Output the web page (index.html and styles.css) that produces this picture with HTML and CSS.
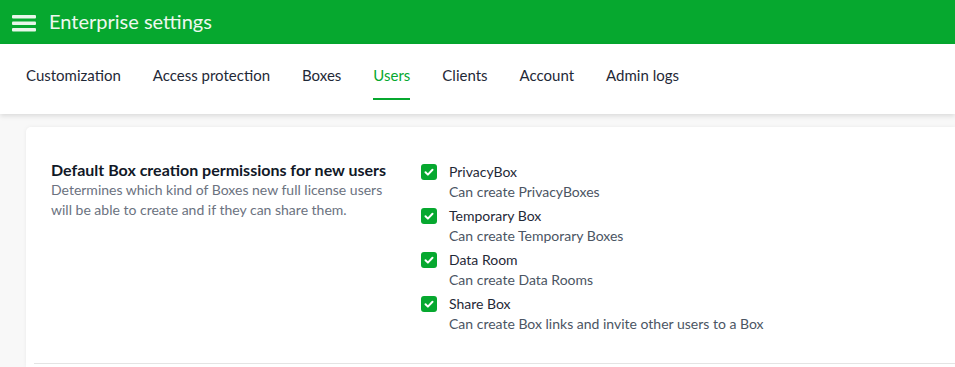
FILE: index.html
```html
<!DOCTYPE html>
<html lang="en">
<head>
    <meta charset="UTF-8">
    <meta name="viewport" content="width=device-width, initial-scale=1.0">
    <title>Enterprise settings</title>
    <link rel="stylesheet" href="styles.css">
</head>
<body>
    <header class="topbar">
        <svg class="menu-icon" width="24" height="18" viewBox="0 0 24 18">
            <rect x="0" y="1" width="24" height="3.5" rx="1"/>
            <rect x="0" y="7.5" width="24" height="3.5" rx="1"/>
            <rect x="0" y="14" width="24" height="3.5" rx="1"/>
        </svg>
        <h1 class="topbar-title">Enterprise settings</h1>
    </header>
    <nav class="tabs">
        <a class="tab">Customization</a>
        <a class="tab">Access protection</a>
        <a class="tab">Boxes</a>
        <a class="tab active">Users</a>
        <a class="tab">Clients</a>
        <a class="tab">Account</a>
        <a class="tab">Admin logs</a>
    </nav>
    <main class="content">
        <section class="card">
            <div class="setting">
                <div class="setting-info">
                    <h2>Default Box creation permissions for new users</h2>
                    <p>Determines which kind of Boxes new full license users will be able to create and if they can share them.</p>
                </div>
                <div class="options">
                    <label class="option">
                        <span class="check"><svg viewBox="0 0 16 16"><path d="M4.5 8.3l2.4 2.3 4.6-4.8"/></svg></span>
                        <span class="option-text">
                            <span class="option-name">PrivacyBox</span>
                            <span class="option-desc">Can create PrivacyBoxes</span>
                        </span>
                    </label>
                    <label class="option">
                        <span class="check"><svg viewBox="0 0 16 16"><path d="M4.5 8.3l2.4 2.3 4.6-4.8"/></svg></span>
                        <span class="option-text">
                            <span class="option-name">Temporary Box</span>
                            <span class="option-desc">Can create Temporary Boxes</span>
                        </span>
                    </label>
                    <label class="option">
                        <span class="check"><svg viewBox="0 0 16 16"><path d="M4.5 8.3l2.4 2.3 4.6-4.8"/></svg></span>
                        <span class="option-text">
                            <span class="option-name">Data Room</span>
                            <span class="option-desc">Can create Data Rooms</span>
                        </span>
                    </label>
                    <label class="option">
                        <span class="check"><svg viewBox="0 0 16 16"><path d="M4.5 8.3l2.4 2.3 4.6-4.8"/></svg></span>
                        <span class="option-text">
                            <span class="option-name">Share Box</span>
                            <span class="option-desc">Can create Box links and invite other users to a Box</span>
                        </span>
                    </label>
                </div>
            </div>
        </section>
    </main>
</body>
</html>
```

FILE: styles.css
```css
body {
    margin: 0;
    font-family: Lato, "Open Sans", sans-serif;
    background-color: #f8f8f8;
    color: #1f2937;
    overflow: hidden;
}
.topbar {
    height: 44px;
    background-color: #06a82f;
    display: flex;
    align-items: center;
    padding-left: 12px;
}
.menu-icon {
    fill: #e8f6ea;
    margin-right: 13px;
    margin-top: 1px;
}
.topbar-title {
    margin: 0 0 2px 0;
    font-size: 20px;
    font-weight: 400;
    color: #eef8ef;
}
.tabs {
    height: 70px;
    box-sizing: border-box;
    background: #fff;
    display: flex;
    align-items: flex-start;
    gap: 32px;
    padding: 22px 0 0 26px;
    box-shadow: 0 2px 5px rgba(0, 0, 0, 0.12);
    position: relative;
}
.tab {
    font-size: 15px;
    line-height: 18px;
    color: #1f2937;
    padding-bottom: 14px;
    border-bottom: 2px solid transparent;
}
.tab.active {
    color: #06a82f;
    border-bottom-color: #06a82f;
}
.content {
    padding: 13px 0 0 26px;
}
.card {
    background: #fff;
    border-radius: 5px 0 0 0;
    box-shadow: 0 0 4px rgba(0, 0, 0, 0.06);
    padding: 33px 0 0 25px;
    min-height: 207px;
}
.setting {
    display: flex;
    padding-bottom: 29px;
    border-bottom: 1px solid #e4e4e4;
    margin-left: -17px;
    padding-left: 17px;
}
.setting-info {
    width: 345px;
    margin-right: 25px;
}
.setting-info h2 {
    margin: 0;
    font-size: 16px;
    font-weight: 700;
    color: #111827;
    line-height: 20px;
}
.setting-info p {
    margin: 0;
    font-size: 14px;
    line-height: 20px;
    color: #6b7280;
}
.options {
    display: flex;
    flex-direction: column;
    gap: 4px;
    padding-top: 2px;
}
.option {
    display: flex;
    align-items: flex-start;
}
.check {
    width: 16px;
    height: 16px;
    border-radius: 3px;
    background: #06a82f;
    margin-top: 2px;
    margin-right: 12px;
    display: flex;
}
.check svg {
    width: 16px;
    height: 16px;
    fill: none;
    stroke: #fff;
    stroke-width: 2;
    stroke-linecap: round;
    stroke-linejoin: round;
}
.option-text {
    display: flex;
    flex-direction: column;
    font-size: 14px;
    line-height: 20px;
}
.option-name {
    color: #1f2937;
}
.option-desc {
    color: #4b5563;
}
```
